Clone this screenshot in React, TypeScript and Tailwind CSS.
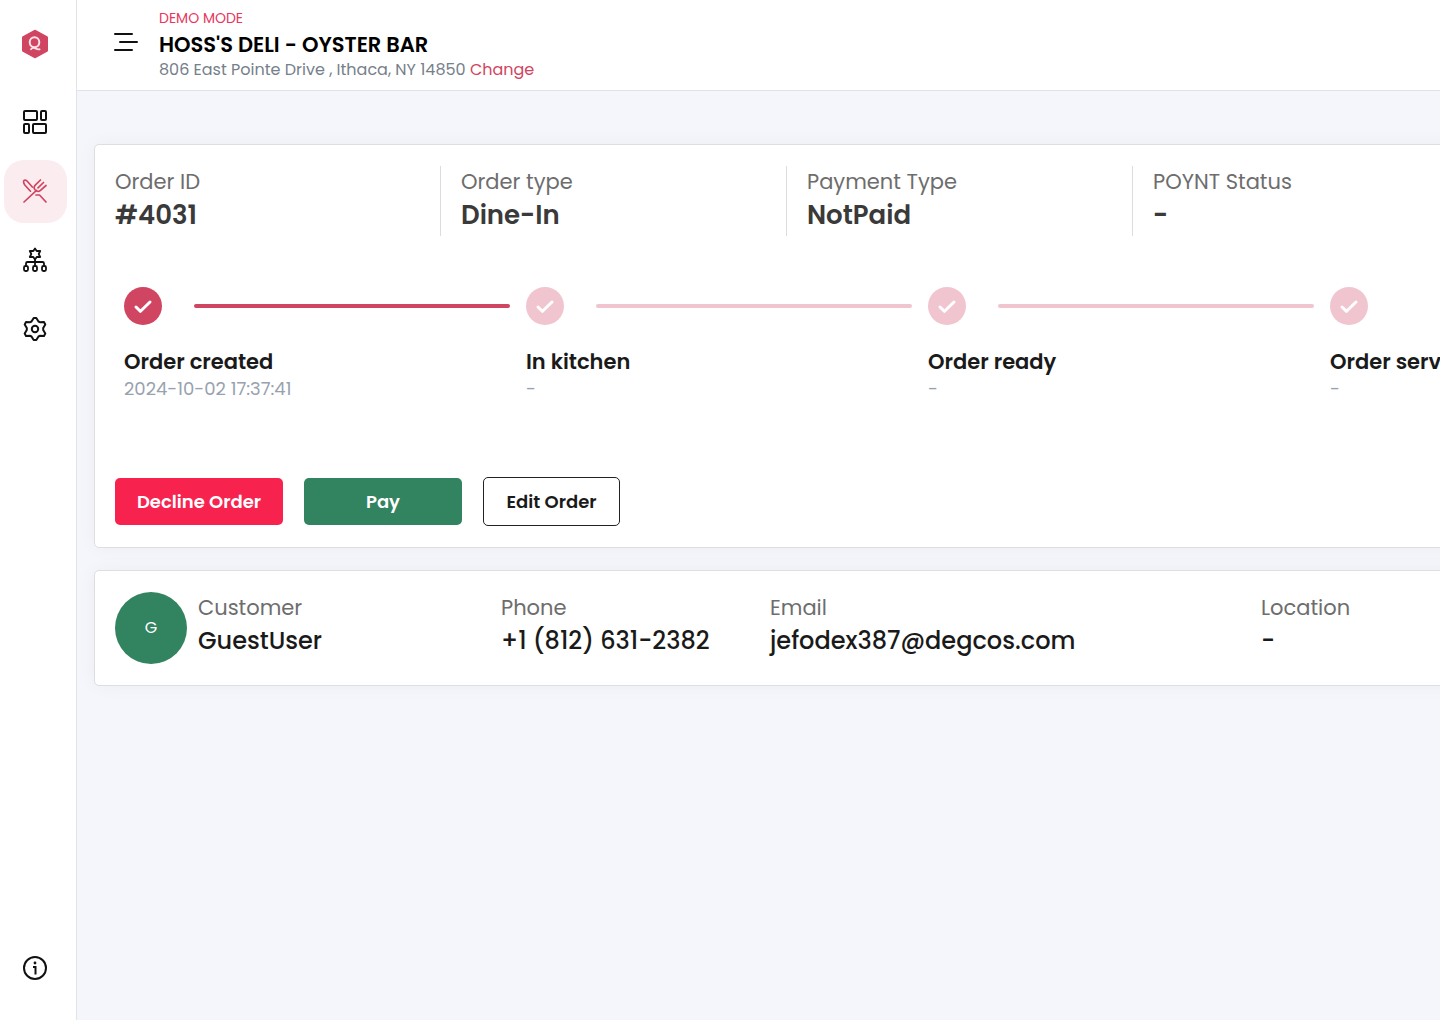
import type { ReactNode } from "react";

const DashboardIcon = () => (
  <svg width="26" height="26" viewBox="0 0 26 26" fill="none" stroke="currentColor" strokeWidth="2">
    <rect x="2" y="2" width="13" height="9" rx="1" />
    <rect x="19" y="2" width="5" height="9" rx="1" />
    <rect x="2" y="15" width="5" height="9" rx="1" />
    <rect x="11" y="15" width="13" height="9" rx="1" />
  </svg>
);

const OrdersIcon = () => (
  <svg
    width="26"
    height="26"
    viewBox="0 0 26 26"
    fill="none"
    stroke="currentColor"
    strokeWidth="1.7"
    strokeLinecap="round"
    strokeLinejoin="round"
  >
    <path d="M2 24 14.500 12.300" />
    <path d="M18.500 2 13.500 6.800c-2 2-1.800 3.600-.3 5.200s3.600 1.800 5.300.3L24 7.500" />
    <path d="M21.500 4.500 16 9.800" />
    <path d="M8.500 13.200 3 7.200C1.300 5 1.200 2.800 2.300 2.200 3.500 1.700 4.500 2.200 5.500 3.500l4.800 5.500" />
    <path d="M14 17h3.500L24 24" />
  </svg>
);

const StaffIcon = () => (
  <svg
    width="26"
    height="26"
    viewBox="0 0 26 26"
    fill="none"
    stroke="currentColor"
    strokeWidth="1.800"
    strokeLinejoin="round"
  >
    <path d="M13 1.500 14.700 4h3.500L16.700 7l1.500 3h-3.500L13 12.500 11.300 10H7.800l1.500-3L7.800 4h3.500z" />
    <path d="M13 12.500V19M4 18v-1.500C4 15.500 4.500 15 5.500 15h15c1 0 1.500.5 1.500 1.500V18" />
    <rect x="2" y="19" width="4" height="5" rx="1.500" />
    <rect x="11" y="19" width="4" height="5" rx="1.500" />
    <rect x="20" y="19" width="4" height="5" rx="1.500" />
  </svg>
);

const SettingsIcon = () => (
  <svg
    width="26"
    height="26"
    viewBox="0 0 26 26"
    fill="none"
    stroke="currentColor"
    strokeWidth="2"
    strokeLinejoin="round"
  >
    <path d="M11.700 2h2.600l2.200 3.500 1.300.7 4.200-.1 1.300 2.300-2.100 3.600v2l2.100 3.600-1.300 2.300-4.200-.1-1.300.7-2.200 3.500h-2.600l-2.200-3.500-1.300-.7-4.200.1-1.300-2.300L4.800 14v-2L2.700 8.400 4 6.100l4.200.1 1.300-.7z" />
    <circle cx="13" cy="13" r="3.200" />
  </svg>
);

const InfoIcon = () => (
  <svg width="26" height="26" viewBox="0 0 26 26" fill="none" stroke="currentColor" strokeWidth="2">
    <circle cx="13" cy="13" r="11" />
    <path d="M11 12h2.500v7.500" />
    <circle cx="13" cy="8" r="1.400" fill="currentColor" stroke="none" />
  </svg>
);

const Logo = () => (
  <svg width="28" height="30" viewBox="0 0 28 30" fill="none">
    <path
      d="M14 2.200 25.500 8.600v12.800L14 27.800 2.500 21.400V8.600z"
      fill="#d04561"
      stroke="#d04561"
      strokeWidth="3"
      strokeLinejoin="round"
    />
    <ellipse cx="13.500" cy="13.200" rx="4.800" ry="5" stroke="#fbe3e8" strokeWidth="2" />
    <path d="M9.500 20.700c1.500-2 3.200-2.300 5-1.300s3 1.300 4.800.8" stroke="#fbe3e8" strokeWidth="1.800" />
  </svg>
);

type NavItemProps = { label: string; active?: boolean; children: ReactNode };

const NavItem = ({ label, active, children }: NavItemProps) => (
  <a
    href="#"
    aria-label={label}
    className={`flex size-[63px] items-center justify-center rounded-[20px] pr-0.5 pb-0.5 ${
      active ? "bg-[#fbecef] text-[#d04561]" : "text-[#111]"
    }`}
  >
    {children}
  </a>
);

const stats = [
  { label: "Order ID", value: "#4031" },
  { label: "Order type", value: "Dine-In" },
  { label: "Payment Type", value: "NotPaid" },
  { label: "POYNT Status", value: "-" },
];

const steps = [
  { title: "Order created", time: "2024-10-02 17:37:41", done: true },
  { title: "In kitchen", time: "-", done: false },
  { title: "Order ready", time: "-", done: false },
  { title: "Order served", time: "-", done: false },
];

const customer = [
  { label: "Customer", value: "GuestUser", width: "w-[303px]" },
  { label: "Phone", value: "+1 (812) 631-2382", width: "w-[269px]" },
  { label: "Email", value: "jefodex387@degcos.com", width: "w-[491px]" },
  { label: "Location", value: "-", width: "flex-1" },
];

const App = () => {
  return (
    <div className="flex min-h-screen bg-[#f4f6fb] font-['Poppins','Inter',sans-serif] text-[#1a1a1a]">
      <aside className="flex w-[77px] shrink-0 flex-col border-r border-[#e2e3e6] bg-white pb-5 pl-1">
        <a href="#" aria-label="Home" className="flex h-[91px] w-[63px] items-center justify-center pr-0.5 pb-1">
          <Logo />
        </a>
        <nav className="flex flex-1 flex-col gap-1.5">
          <NavItem label="Dashboard">
            <DashboardIcon />
          </NavItem>
          <NavItem label="Orders" active>
            <OrdersIcon />
          </NavItem>
          <NavItem label="Staff">
            <StaffIcon />
          </NavItem>
          <NavItem label="Settings">
            <SettingsIcon />
          </NavItem>
        </nav>
        <NavItem label="Info">
          <InfoIcon />
        </NavItem>
      </aside>

      <div className="flex min-w-0 flex-1 flex-col overflow-hidden">
        <header className="flex items-start gap-5 border-b border-[#e2e3e6] bg-white pt-2 pb-2.5 pl-9">
          <button type="button" aria-label="Toggle menu" className="mt-[22px]">
            <svg width="26" height="24" viewBox="0 0 26 24" stroke="#111" strokeWidth="2" strokeLinecap="round">
              <path d="M2 4h17M7 12h17M2 20h17" />
            </svg>
          </button>
          <div className="flex flex-col">
            <span className="text-[14px] leading-5 text-[#e8365d]">DEMO MODE</span>
            <h1 className="mt-0.5 text-[21px] leading-[30px] font-semibold text-black">HOSS'S DELI - OYSTER BAR</h1>
            <p className="text-[16px] leading-5 text-[#76808a]">
              806 East Pointe Drive , Ithaca, NY 14850{" "}
              <a href="#" className="text-[#d04561]">
                Change
              </a>
            </p>
          </div>
        </header>

        <main className="flex flex-col gap-[22px] pt-[53px] pl-[17px]">
          <section className="w-full min-w-[1406px] rounded-[5px] border border-[#dddee1] bg-white px-5 py-[21px] shadow-[0_0_20px_rgba(0,0,0,0.04)]">
            <dl className="grid grid-cols-4 gap-5">
              {stats.map((s) => (
                <div key={s.label} className="border-r border-[#dcdcdc] pb-1 last:border-r-0">
                  <dt className="text-[21px] leading-8 text-[#6d6d6d]">{s.label}</dt>
                  <dd className="text-[26px] leading-[34px] font-semibold text-[#3a3a3a]">{s.value}</dd>
                </div>
              ))}
            </dl>

            <ol className="mt-[51px] flex pl-[9px]">
              {steps.map((step, i) => (
                <li key={step.title} className="w-[402px] shrink-0">
                  <div className="flex items-center">
                    <span
                      className={`flex size-[38px] items-center justify-center rounded-full ${
                        step.done ? "bg-[#d04561]" : "bg-[#f0c5cf]"
                      }`}
                    >
                      <svg
                        width="20"
                        height="16"
                        viewBox="0 0 20 16"
                        fill="none"
                        stroke="#fff"
                        strokeWidth="3"
                        strokeLinecap="round"
                        strokeLinejoin="round"
                      >
                        <path d="m3 9 4.500 4.300L17 4" />
                      </svg>
                    </span>
                    {i < steps.length - 1 && (
                      <span
                        className={`mr-4 ml-8 h-1 flex-1 rounded-full ${step.done ? "bg-[#d04561]" : "bg-[#f0c5cf]"}`}
                      />
                    )}
                  </div>
                  <h2 className="mt-[23px] text-[21px] leading-7 font-semibold">{step.title}</h2>
                  <p className="text-[18px] leading-[26px] text-[#98a2ae]">{step.time}</p>
                </li>
              ))}
            </ol>

            <div className="mt-[75px] flex items-center gap-[21px] text-[18px] font-semibold">
              <button type="button" className="h-[47px] w-[168px] rounded-[5px] bg-[#f8224f] text-white">
                Decline Order
              </button>
              <button type="button" className="h-[47px] w-[158px] rounded-[5px] bg-[#32835f] text-white">
                Pay
              </button>
              <button type="button" className="h-[49px] w-[137px] rounded-[5px] border border-[#222] bg-white">
                Edit Order
              </button>
            </div>
          </section>

          <section className="flex w-full min-w-[1406px] items-start rounded-[5px] border border-[#dddee1] bg-white px-5 py-[21px] shadow-[0_0_20px_rgba(0,0,0,0.04)]">
            <div className="mr-[11px] flex size-[72px] shrink-0 items-center justify-center rounded-full bg-[#32835f] text-[16px] text-white">
              G
            </div>
            <dl className="flex flex-1">
              {customer.map((c) => (
                <div key={c.label} className={c.width}>
                  <dt className="text-[21px] leading-8 text-[#6d6d6d]">{c.label}</dt>
                  <dd className="text-[24px] leading-[34px] font-medium">{c.value}</dd>
                </div>
              ))}
            </dl>
          </section>
        </main>
      </div>
    </div>
  );
};

export default App;
